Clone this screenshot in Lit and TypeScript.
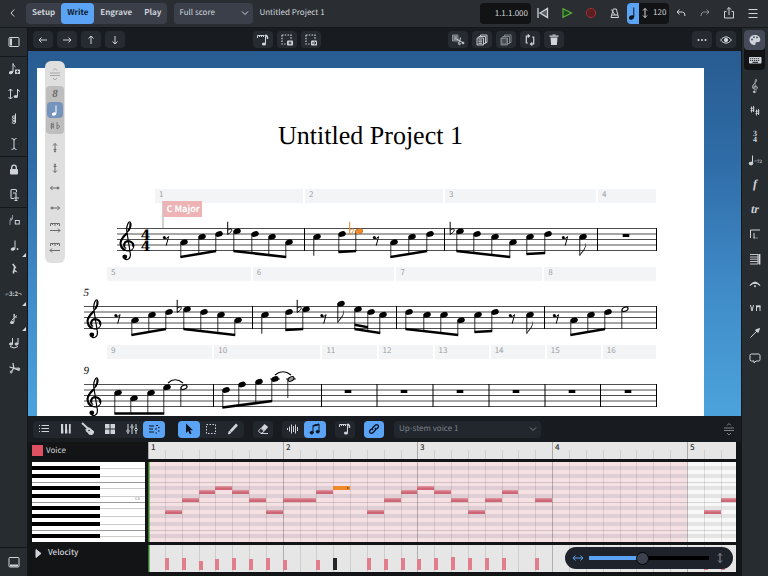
import { LitElement, html, svg, css, TemplateResult, SVGTemplateResult } from "lit";
import { customElement, state } from "lit/decorators.js";
import { classMap } from "lit/directives/class-map.js";

type Shape = SVGTemplateResult;

const clef: Shape = svg`
  <g fill="none" stroke="currentColor" stroke-linecap="round">
    <path stroke-width="1.2" d="M-1.2 3.2C-4.5 1.5-3.5-4.2 1-4.2C5-4.2 6.9-1.5 6.8 1C6.6 4.2 3.8 6 .8 5.9C-3.4 5.8-7-1-6.6-2.4C-6.4-7.5-1-11 1.8-14.5C4-17.5 4-20.5 3.4-22.5C2.8-24.5.8-22 0-18.5C-.7-15.5-.2-13 .3-10.5L3.4 9C4 14-.5 15.8-2.4 13.6"/>
    <path stroke-width="2" d="M-2.6 1C-3.2-2-1.5-3.6 1-3.7C4.4-3.7 6.2-1.5 6.2 1"/>
    <path stroke-width="2" d="M-2.4 5C-5 3.6-6.6 1.4-6.4-2C-6.2-6-3-8.8-.4-11.4"/>
    <path stroke-width="2" d="M1.6-14.8C3.4-17 3.8-19 3.4-21.2"/>
  </g>
  <circle cx="-2.2" cy="11.8" r="2.4" fill="currentColor"/>`;

const quarter: Shape = svg`<ellipse cx="7" cy="12" rx="2.3" ry="1.7" transform="rotate(-20 7 12)" fill="currentColor" stroke="none"/><path d="M9 11.5V3.5"/>`;

const icons: Record<string, Shape> = {
  back: svg`<path d="M9.2 4.5L6 8l3.2 3.5"/>`,
  down: svg`<path d="M5 6.5L8 9.5l3-3"/>`,
  left: svg`<path d="M12 8H4M6.5 5.5L4 8l2.5 2.5"/>`,
  right: svg`<path d="M4 8h8M9.5 5.5L12 8l-2.5 2.5"/>`,
  up: svg`<path d="M8 12V4M5.500 6.500L8 4l2.500 2.500"/>`,
  downArrow: svg`<path d="M8 4v8M5.500 9.500L8 12l2.500-2.500"/>`,
  prev: svg`<path d="M3 3v10M5 8l7.500-4.500v9z" stroke-width="1.300" fill="#5a5f66"/>`,
  play: svg`<path d="M4 3.800L12.500 8L4 12.200z" fill="#1d4a1c" stroke="#5fb23f" stroke-width="1.200"/>`,
  record: svg`<circle cx="8" cy="8" r="4.600" fill="#5b1f22" stroke="#a33231"/>`,
  metronome: svg`<path d="M6.300 4h3l2.200 8.500h-7.500zM5 10h6M8 10L4.500 4.500"/>`,
  tempoNote: svg`<ellipse cx="6.500" cy="12.500" rx="2.700" ry="2" transform="rotate(-20 6.500 12.500)" fill="#10151c" stroke="none"/><path d="M8.800 12V2.500" stroke="#10151c"/>`,
  vertical: svg`<path d="M8 3.500v9M6 5.500l2-2 2 2M6 10.500l2 2 2-2"/>`,
  horizontal: svg`<path d="M3 8h10M5.500 5.500L3 8l2.500 2.500M10.500 5.500L13 8l-2.500 2.500"/>`,
  undo: svg`<path d="M6.500 4.500L4 7l2.500 2.500M4 7h5.500q2.500 0 2.500 4"/>`,
  redo: svg`<path d="M9.500 4.500L12 7l-2.500 2.500M12 7H6.500Q4 7 4 11" opacity=".55"/>`,
  share: svg`<path d="M5.500 6.500h-2v6.500h9V6.500h-2M8 10V2.500M5.800 4.700L8 2.500l2.200 2.200"/>`,
  menu: svg`<path d="M3.500 4.500h9M3.500 8.500h9M3.500 12.500h9"/>`,
  ruleNote: svg`<path d="M2.500 6V3.500h7M4.500 3.500V5M6.500 3.500V5M8.500 3.500V5M10.500 3v8.500"/><path d="M10.500 3q2.500 1 2 4" stroke-width="1.400"/><ellipse cx="9" cy="12" rx="2.100" ry="1.600" fill="currentColor" stroke="none"/>`,
  boxPlus: svg`<path d="M3 3h9v5M3 3v9h4" stroke-dasharray="1.500 1.300" stroke-width="1.200"/><rect x="8" y="8.500" width="6" height="5" rx="1" fill="currentColor" stroke="none"/><path d="M11 9.500v3M9.500 11h3" stroke="#22272e" stroke-width=".9"/>`,
  boxArrow: svg`<path d="M3 3h9v5M3 3v9h4" stroke-dasharray="1.500 1.300" stroke-width="1.200"/><rect x="8" y="8.500" width="6" height="5" rx="1" fill="currentColor" stroke="none"/><path d="M9 11h4M11.500 9.500L13 11l-1.500 1.500" stroke="#22272e" stroke-width=".9"/>`,
  cutBox: svg`<path d="M2.500 3h5.500v6h-5.500z" fill="#5b616a" stroke="#9aa0a8" stroke-width=".8"/><path d="M3.800 5h3M3.800 7h2" stroke-width=".8"/><path d="M5.500 6.500l8 4.500M10.500 5.500L9.800 9l-2 2"/><circle cx="13" cy="11" r=".9"/><circle cx="9.500" cy="11.800" r=".9"/>`,
  copy: svg`<g stroke-width=".9"><path d="M6.500 4V3h6.500v7.500h-1.500M4.800 6V4.500h6.700V11.500H10"/><path d="M3 6h6.500v7H3z" fill="#3a4048"/><path d="M4.500 8h3.500M4.500 9.700h3.500M4.500 11.400h3.500"/></g>`,
  copyDim: svg`<g opacity=".6" stroke-width=".9"><path d="M6.500 4V3h6.500v7.500h-1.500M4.800 6V4.500h6.700V11.500H10"/><path d="M3 6h6.500v7H3z" fill="#8a9098"/><path d="M4.500 8h3.500M4.500 10h3.500" stroke="#22272e"/></g>`,
  loop: svg`<path d="M7.500 4H4.300v7h1.500M8.500 12h3.200V5h-1.500M5.700 2.500L7.500 4 5.700 5.500M10.300 10.500L8.500 12l1.800 1.500" stroke-width="1.200"/>`,
  trash: svg`<path d="M4.500 5.500h7l-.6 7.500h-5.800zM3.500 3.500h9v1.200h-9z" fill="currentColor" stroke="none"/><path d="M6.500 3h3"/>`,
  more: svg`<g fill="currentColor" stroke="none"><circle cx="4.500" cy="8" r="1"/><circle cx="8" cy="8" r="1"/><circle cx="11.500" cy="8" r="1"/></g>`,
  eye: svg`<path d="M2.500 8Q8 1.500 13.500 8Q8 14.500 2.500 8z"/><circle cx="8" cy="8" r="1.700" fill="currentColor"/>`,
  panelLeft: svg`<rect x="3" y="3.500" width="10" height="9" rx="1"/><path d="M5 4.500v7" stroke-width="2"/>`,
  panelBottom: svg`<rect x="3" y="3.500" width="10" height="9.500" rx="1"/><path d="M4 11.500h8" stroke-width="2"/>`,
  notePlus: svg`<ellipse cx="5" cy="11.500" rx="2.200" ry="1.600" transform="rotate(-20 5 11.500)" fill="currentColor" stroke="none"/><path d="M7 11V2.500q.2 2 2.500 3.500"/><rect x="9" y="8.500" width="5" height="4.500" fill="currentColor" stroke="none"/><path d="M11.500 9.300v3M10 10.700h3" stroke="#272c31" stroke-width=".9"/>`,
  moveNote: svg`<path d="M4.500 3v10M2.500 5l2-2 2 2M2.500 11l2 2 2-2M11.500 10V3q.2 1.500 2.500 2.500"/><ellipse cx="9.800" cy="10.500" rx="2.100" ry="1.600" fill="currentColor" stroke="none"/>`,
  chord: svg`<path d="M9.500 2.500V12"/><ellipse cx="7.800" cy="6" rx="1.500" ry="1.100"/><ellipse cx="7.800" cy="8.700" rx="1.500" ry="1.100"/><ellipse cx="7.800" cy="11.500" rx="1.500" ry="1.100"/>`,
  ibeam: svg`<path d="M5.500 2.500Q8 2.500 8 4.500Q8 2.500 10.500 2.500M8 4.500v7M5.500 13.500Q8 13.500 8 11.500Q8 13.500 10.500 13.500"/>`,
  lock: svg`<rect x="4" y="7" width="8" height="5.500" rx="1" fill="currentColor" stroke="none"/><path d="M5.700 7V5.500a2.300 2.300 0 014.600 0V7" stroke-width="1.300"/>`,
  caretG: svg`<path d="M10.500 5V3.500q0-1-1-1H6q-1 0-1 1v7q0 1 1 1h2M7 6h3v7.500M8.500 13.500h3M8 11h5" stroke-width="1.100"/>`,
  noteInput: svg`<path d="M6.500 3v4M4 8v5M4 8h2" opacity=".6"/><ellipse cx="5.300" cy="7" rx="1" ry=".8" opacity=".6"/><rect x="9.300" y="8.500" width="4" height="3.500"/>`,
  dotted: svg`${quarter}<circle cx="11.500" cy="12" r=".9" fill="currentColor" stroke="none"/>`,
  note: quarter,
  restQ: svg`<path d="M6.800 3l2.500 3.500q-2.500 1 0 3.500q-3-.8-1.500 2.500" stroke-width="1.500"/>`,
  grace: svg`<ellipse cx="6" cy="11.500" rx="2" ry="1.500" fill="currentColor" stroke="none"/><path d="M8 11V3q.2 2 2.500 4M5.500 9.500l5.500-5"/>`,
  tie: svg`<ellipse cx="5" cy="9" rx="1.500" ry="1.100" fill="currentColor"/><ellipse cx="10.500" cy="9" rx="1.500" ry="1.100" fill="currentColor"/><path d="M6.500 9V3M12 9V3M4 11.500q4 3 8 0"/>`,
  scissors: svg`<path d="M7 3l.8 5.200 5.700 2.300M3.500 7l4.300 1.200L5.500 11.500" stroke-width="1.200"/><path d="M7.800 8.200h5"/><circle cx="5.200" cy="12" r="1"/><circle cx="12.800" cy="9" r="1"/>`,
  palette: svg`<path d="M8 3c-3.500 0-5.500 2.200-5.500 5s2.300 5 5 5c1.500 0 .8-1.500 1-2.300.3-1 4.800.5 4.800-2.900C13.300 5 11 3 8 3z" fill="currentColor" stroke="none"/><g fill="#454b58" stroke="none"><circle cx="5" cy="7.500" r=".9"/><circle cx="7" cy="5.200" r=".9"/><circle cx="10" cy="5.400" r=".9"/></g>`,
  keyboard: svg`<rect x="2" y="5" width="12.500" height="6.500" rx=".8" fill="currentColor" stroke="none"/><path d="M3.200 6.700h10M3.200 8.500h10" stroke="#121314" stroke-dasharray="1 1"/><path d="M5.500 10.300h5.500" stroke="#121314"/>`,
  clefIcon: svg`<g transform="translate(8 9.500) scale(.36)" stroke="currentColor" stroke-width="2">${clef}</g>`,
  sharps: svg`<g stroke-width=".9"><path d="M4.500 3.500v6M6.500 3v6M3.500 5.500l4-.6M3.500 7.700l4-.6M9.500 6.500v6M11.500 6v6M8.500 8.500l4-.6M8.500 10.700l4-.6"/></g>`,
  mark: svg`<path d="M3.500 4v8M3.500 4h9.500M7 7v5M9.500 12h1M6.500 12h2"/>`,
  barlines: svg`<path d="M3 3.500h8M3 6h8M3 8.200h8M3 10.500h8M3 13h8M11 3v10" stroke-width=".9"/><path d="M12.500 3v10.500" stroke-width="1.800"/>`,
  fermata: svg`<path d="M3 9.500Q8 2.500 13 9.500Q8 5 3 9.500z" fill="currentColor"/><circle cx="8" cy="10.300" r="1" fill="currentColor" stroke="none"/>`,
  bows: svg`<path d="M3.500 5L5 11l1.500-6M9.500 11V6.500M13 11V6.500"/><path d="M9 6.300h4.500" stroke-width="2"/>`,
  line: svg`<path d="M3.500 12.500L10 6"/><path d="M12.500 3.500L8.500 5l2.500 2.500z" fill="currentColor"/>`,
  comment: svg`<path d="M4.500 4h7q1.500 0 1.500 1.500v4q0 1.500-1.500 1.500H9l-2 2v-2H4.500Q3 11 3 9.500v-4Q3 4 4.500 4z"/>`,
  grip: svg`<path d="M3 7h10M3 9.500h10M6 4.500l2-2 2 2M6 12l2 2 2-2" stroke-width=".9"/>`,
  accidentals: svg`<path d="M4.500 5v6M6.200 4.500v6M3.500 7l3.500-.5M3.500 9.200l3.500-.5M10 4v7q3-1.500 2.500-3t-2.500 0" stroke-width=".8"/>`,
  stretchUp: svg`<path d="M8 3.500V12M6 5.500l2-2 2 2M6.500 9.500h3"/><circle cx="8" cy="11.500" r=".6"/>`,
  stretchDown: svg`<path d="M8 4v8.500M6 10.500l2 2 2-2M6.500 6.500h3"/><circle cx="8" cy="4.500" r=".6"/>`,
  nudgeLeft: svg`<path d="M3.500 8H12M5.500 6l-2 2 2 2"/><circle cx="11" cy="8" r="1"/>`,
  nudgeRight: svg`<path d="M4 8h8.500M10.500 6l2 2-2 2"/><circle cx="5" cy="8" r="1"/>`,
  spaceRight: svg`<path d="M3.500 6V3.500h9V6M5.500 3.500V5M8 3.500V6M10.500 3.500V5M3 10.500h10M11 8.500l2 2-2 2"/>`,
  spaceLeft: svg`<path d="M3.500 6V3.500h9V6M5.500 3.500V5M8 3.500V6M10.500 3.500V5M13 10.500H3M5 8.500l-2 2 2 2"/>`,
  list: svg`<path d="M5.500 4.500h7.500M5.500 7.500h7.500M5.500 10.500h7.500M3 4.500h1M3 7.500h1M3 10.500h1"/>`,
  piano: svg`<path d="M3 3v9.500h2.500V3zM7 3v9.500h2.500V3zM10.700 3v9.500h2V3z" fill="currentColor" stroke="none"/><path d="M6.200 2.500v6M10 2.500v6" stroke="#22272e" stroke-width="1.800"/><path d="M6.200 8v5M10 8v5" stroke="#22272e" stroke-width=".8"/>`,
  guitar: svg`<path d="M2 2l6 5.500" stroke-width="1.800"/><path d="M6 8.500q1-2 3-1.500 2 .5 2.500 2 2.500.5 2 2.800-.5 2.200-3 1.700-2 0-2.500-2.200Q6 11 6 8.500z" fill="currentColor"/><circle cx="9" cy="9.500" r=".8" fill="#22272e" stroke="none"/>`,
  tiles: svg`<g fill="currentColor" stroke="none"><rect x="3" y="3" width="4.500" height="4.500"/><rect x="8.500" y="3" width="4.500" height="4.500"/><rect x="3" y="8.500" width="4.500" height="4.500"/><rect x="8.500" y="8.500" width="4.500" height="4.500"/></g>`,
  mixer: svg`<path d="M4 3v10M8 3v10M12 3v10"/><g fill="#22272e"><circle cx="4" cy="10" r="1.200"/><circle cx="8" cy="6" r="1.200"/><circle cx="12" cy="8.500" r="1.200"/></g>`,
  pianoRoll: svg`<path d="M3 5h5M3 8h4M3 11h5M10 4.500h2M12 6.500h1.500M9 8h2M12 10h1.500M9.500 12h1.500" stroke-width="1.100"/>`,
  pointer: svg`<path d="M5 2.500v9.500l2.300-2 1.500 3.200 1.700-.8-1.500-3.100h3z" fill="currentColor" stroke="none"/>`,
  marquee: svg`<rect x="3.500" y="3.500" width="9" height="9" stroke-dasharray="1.500 1.500"/>`,
  pencil: svg`<path d="M3.500 13l.8-3 1.500 1.800z" fill="currentColor"/><path d="M5.500 10.500l6.500-7" stroke-width="2.600"/>`,
  eraser: svg`<path d="M6 7L9.500 3l3.700 3-3.500 4z" fill="currentColor" stroke="none"/><path d="M5.800 7.300L3.500 10q1 2 2.700 2.300l3-2zM6 12.500h7"/>`,
  wave: svg`<path d="M2.500 7v2M4.500 5.500v5M6.500 3.500v9M8.500 5v6M10.500 3.500v9M12.500 6v4"/>`,
  beamed: svg`<path d="M6 11.500V4.500l6-1.500v7.500"/><path d="M6 5l6-1.500" stroke-width="1.800"/><ellipse cx="4.700" cy="11.700" rx="1.600" ry="1.300" fill="currentColor"/><ellipse cx="10.700" cy="10.700" rx="1.600" ry="1.300" fill="currentColor"/>`,
  link: svg`<g stroke-width="1.400"><path d="M7 9q-1.300-1.300 0-2.600l2.400-2.300q1.400-1 2.600.1 1 1.200-.1 2.500L10.300 8.300"/><path d="M9 7q1.300 1.300 0 2.600l-2.400 2.300q-1.400 1-2.600-.1-1-1.200.1-2.500L5.700 7.700"/></g>`,
};

const icon = (name: string): TemplateResult => html`<svg class="icon" viewBox="0 0 16 16" aria-hidden="true">${icons[name]}</svg>`;

const glyphText = (text: string, size: number): TemplateResult =>
  html`<svg class="icon" viewBox="0 0 16 16" aria-hidden="true"><text class="glyph italic" x="8" y="11" font-size=${size}>${text}</text></svg>`;

/* Vertical position of each pitch on the staff. */
const Y: Record<string, number> = { A: 39.25, C: 33.75, D: 31, E: 28.25, F: 25.5, G: 22.75, H: 20 };

interface Group { notes: [number, string][]; from?: number; to?: number; }
interface System {
  number?: string; left: number; lead: number; cells: [string, number][]; bars: number[];
  rests: number[]; whole: number[]; groups: Group[]; extra: Shape;
}

const head = (x: number, p: string, fill = "#000") =>
  svg`<ellipse cx=${x} cy=${Y[p]} rx="3.900" ry="2.700" transform="rotate(-20 ${x} ${Y[p]})" fill=${fill}/>`;
const half = (x: number, p: string, end: number) => svg`
  <ellipse cx=${x} cy=${Y[p]} rx="3.200" ry="1.900" transform="rotate(-24 ${x} ${Y[p]})" fill="#fff" stroke="#000" stroke-width="1.200"/>
  <path d="M${x - 3.2} ${Y[p] + 1}V${end}" stroke="#000" stroke-width=".8"/>`;
const flat = (x: number, color = "#000") =>
  svg`<path transform="translate(${x} ${Y.E})" d="M-1.800-9.500V3.200C1 1.500 2.800-.5 2.200-1.800C1.400-3-.5-2-1.800-.8" fill="none" stroke=${color}/>`;
const single = (x: number, p: string, len: number) => svg`${head(x, p)}
  <path d="M${x - 3.2} ${Y[p] + 1}v${len}" stroke="#000" stroke-width=".9"/>`;
const flagged = (x: number, p: string) => svg`${single(x, p, 18)}
  <path d="M${x - 3.2} ${Y[p] + 19}c.4-4 6.200-6 5.600-13c2 5-2.600 9-5.600 13z"/>`;
const rest8 = (x: number) => svg`<g transform="translate(${x} 37)"><circle cx="-1.700" cy="-2.600" r="1.500"/>
  <path d="M-2-1.800Q.5-.6 2.600-3.400L.2 5.600" fill="none" stroke="#000"/></g>`;
const beamed = (g: Group) => {
  const from = g.from ?? 50, to = g.to ?? 50;
  const x0 = g.notes[0][0] - 3.2, x1 = g.notes[g.notes.length - 1][0] - 3.2;
  const at = (x: number) => from + ((to - from) * (x - x0)) / (x1 - x0);
  return svg`${g.notes.map(([x, p]) => svg`${head(x, p)}<path d="M${x - 3.2} ${Y[p] + 1}V${at(x - 3.2)}" stroke="#000" stroke-width=".8"/>`)}
    <path d="M${x0 - .4} ${from - 1.3}L${x1 + .4} ${to - 1.3}v2.600L${x0 - .4} ${from + 1.3}z"/>`;
};

const systems: System[] = [
  {
    left: 117, lead: 116, cells: [["1", 148], ["2", 138], ["3", 151], ["4", 58]],
    bars: [304.500, 444.500, 597.500, 656.500], rests: [166, 376, 565], whole: [626],
    groups: [
      { notes: [[184, "A"], [202, "C"], [219, "D"]], from: 54, to: 48 },
      { notes: [[237, "E"], [255, "D"], [272, "C"], [289, "A"]], from: 48, to: 54 },
      { notes: [[394, "A"], [412, "C"], [430, "D"]], from: 54, to: 48 },
      { notes: [[460, "E"], [477, "D"], [495, "C"], [513, "A"]], from: 48, to: 54 },
      { notes: [[530, "C"], [548, "D"]], from: 51, to: 50 },
      { notes: [[342, "D"], [359, "E"]], from: 49, to: 48 },
    ],
    extra: svg`${flat(229.5)}${flat(452)}${flat(351.5, "#f0872b")}${head(359, "E", "#f0872b")}
      ${single(317, "C", 18)}${flagged(583, "C")}
      <text class="time" x="145.500" y="36.500">4</text><text class="time" x="145.500" y="47.500">4</text>
      <path d="M163 -2V25" stroke="#b0b0b0" stroke-width="1.200"/>
      <rect x="163" y="-2" width="39" height="16" fill="#edb3b5"/>
      <text class="key" x="166.500" y="9">C Major</text>`,
  },
  {
    number: "5", left: 84, lead: 68, cells: [["5", 144], ["6", 142], ["7", 146], ["8", 112]],
    bars: [252.500, 396.500, 544.500, 656.500], rests: [117.500, 323.500, 512, 556], whole: [],
    groups: [
      { notes: [[135, "A"], [152, "C"], [169, "D"]], from: 54, to: 48 },
      { notes: [[187, "E"], [204, "D"], [221, "C"], [238, "A"]], from: 48, to: 54 },
      { notes: [[289, "D"], [306, "E"]], from: 49, to: 48 },
      { notes: [[358, "E"], [371, "D"], [383, "C"]], from: 48, to: 52 },
      { notes: [[409, "D"], [427, "C"], [444, "C"], [461, "A"]], from: 48, to: 54 },
      { notes: [[478, "C"], [495, "D"]], from: 51, to: 50 },
      { notes: [[574, "A"], [591, "C"], [608, "D"]], from: 54, to: 48 },
    ],
    extra: svg`${flat(179)}${flat(299)}${single(265, "C", 18)}${flagged(341, "G")}${flagged(530, "C")}
      <path d="M354.500 42.500L368 45v2.400L354.500 45z"/>${half(625, "E", 47.5)}`,
  },
  {
    number: "9", left: 84, lead: 68,
    cells: [["9", 105], ["10", 106], ["11", 54], ["12", 54], ["13", 54], ["14", 54], ["15", 54], ["16", 53]],
    bars: [213.500, 321.500, 377, 433, 489, 545, 600.500, 656.500], rests: [],
    whole: [348, 404, 460, 516, 572, 628],
    groups: [
      { notes: [[118, "C"], [134, "A"], [151, "C"], [167, "E"]], from: 54.5, to: 54.5 },
      { notes: [[226, "D"], [242, "F"], [259, "G"], [275, "H"]], from: 48.5, to: 42 },
    ],
    extra: svg`${half(184, "E", 47.5)}${half(291, "H", 39)}
      <path d="M270 20h10M286 20h10" stroke="#000" stroke-width=".8"/>
      <path d="M168 24Q175 17.500 183 24M275 16Q283 9.500 291 16" fill="none" stroke="#000" stroke-width="1.200"/>`,
  },
];

const STEP = 16.84;
const DARK_ROWS = [1, 3, 6, 8, 11, 13, 15, 18];
/* start (in eighths), row, length, velocity height */
const notes: [number, number, number, number][] = [
  [1, 12, 1, 12], [2, 9, 1, 12], [3, 7, 1, 9], [4, 6, 1, 11], [5, 7, 1, 12], [6, 9, 1, 11], [7, 12, 1, 12],
  [8, 9, 2, 10], [10, 7, 1, 10], [11, 6, 1, 12], [13, 12, 1, 12], [14, 9, 1, 11], [15, 7, 1, 12],
  [16, 6, 1, 11], [17, 7, 1, 12], [18, 9, 1, 13], [19, 12, 1, 12], [20, 9, 1, 12], [21, 7, 1, 12], [23, 9, 1, 12],
  [33, 12, 1, 11], [34, 9, 1, 11],
];
const SELECTED = 11;
const beats = Array.from({ length: 40 }, (_, i) => i);
const bx = (i: number) => Math.round(i * STEP);

@customElement("app-root")
export class AppRoot extends LitElement {
  @state() private mode = "Write";
  @state() private zoom = 44;

  static styles = css`
    :host { display: grid; grid-template-rows: 28px minmax(0, 1fr); height: 100vh; overflow: hidden; background: #15171a; color: #d0d4da;
      font: 8px/12px "Noto Sans CJK SC", "Noto Sans", sans-serif; text-rendering: geometricPrecision; }
    * { box-sizing: border-box; }
    button, select, input { font: inherit; color: inherit; margin: 0; padding: 0; border: 0; background: none; text-rendering: inherit; }
    button { display: flex; align-items: center; justify-content: center; }
    h1, p { margin: 0; }
    .icon { width: 16px; height: 16px; flex: none; display: block; fill: none; stroke: currentColor; stroke-width: 1; overflow: visible; }
    .glyph { font-family: "Liberation Serif", serif; font-weight: 700; text-anchor: middle; fill: currentColor; stroke: none; }
    .italic { font-style: italic; }
    header { display: flex; align-items: center; padding: 0 3px 1px 0; background: #2a2e33; border-bottom: 1px solid #15181b; }
    .back { width: 26px; height: 20px; }
    .modes { display: flex; background: #3a3f4a; border-radius: 4px; }
    .modes button { height: 21px; padding: 0 6px; border-radius: 4px; font-weight: 700; }
    .modes .on { background: #5ba4f5; color: #0c1a2c; }
    .pick { position: relative; display: flex; align-items: center; background: #3a3f4a; border-radius: 4px; }
    .pick select { appearance: none; width: 100%; height: 100%; padding: 0 18px 0 5px; outline: 0; }
    .pick .icon { position: absolute; right: 0; pointer-events: none; }
    .layout { width: 79px; height: 21px; margin: 0 6px 0 7px; }
    .transport { margin-left: auto; display: flex; align-items: center; }
    .transport button { width: 24px; height: 21px; }
    .position { width: 51px; height: 21px; padding-right: 3px; line-height: 21px; text-align: right; background: #121314; border-radius: 4px; }
    .tempo { display: flex; align-items: center; width: 42px; height: 21px; background: #121314; border-radius: 4px; overflow: hidden; }
    .tempo .beat { width: 13px; background: #5ba4f5; }
    .tempo .icon { margin: 0 -2px; }
    .tempo input { width: 18px; margin-left: 2px; outline: 0; }
    .body { display: grid; grid-template-columns: 28px minmax(0, 1fr) 27px; min-height: 0; }
    .rail { background: #272c31; display: flex; flex-direction: column; border-right: 1px solid #14171a; min-height: 0; }
    .rail.right { border-right: 0; border-left: 1px solid #14171a; }
    .set { display: grid; grid-auto-rows: 1fr; border-bottom: 1px solid #15181b; }
    .set button, .tools button { position: relative; width: 100%; }
    .h1 { height: 29px; }
    .h2 { height: 51px; }
    .h4 { height: 100px; }
    .h7 { height: 172px; border: 0; }
    .last { height: 29px; margin-top: auto; border-top: 1px solid #15181b; border-bottom: 0; }
    .more::after { content: ""; position: absolute; right: 1px; bottom: 0; border: 2px solid; border-color: transparent #d5d9df #d5d9df transparent; }
    .tiny { font-size: 6px; font-weight: 700; }
    .toggle { margin: 2px 3px 4px 2px; background: #121314; border-radius: 4px; }
    .toggle button { width: 100%; height: 20px; border-radius: 4px; }
    .toggle .on { background: #454b58; }
    .tools { display: grid; height: 296px; grid-auto-rows: 1fr; }
    main { display: grid; grid-template-rows: 23px minmax(0, 1fr) 160px; min-width: 0; min-height: 0; }
    .bar { display: flex; align-items: center; justify-content: space-between; padding: 0 5px; background: #181b20; }
    .bar div { display: flex; gap: 4px; }
    .bar button { width: 20px; height: 17px; border-radius: 4px; background: #262b31; }
    .canvas { position: relative; overflow: hidden; padding: 17px 37px 0 9px; background: linear-gradient(#285c91, #2f6ca7 30%, #3f8bc8 65%, #4ca3dc); }
    .page { background: #fff; color: #000; min-height: 100%; }
    .page h1 { height: 121px; padding-top: 54px; font: 26px/28px "Liberation Serif", serif; text-align: center; }
    .measures { display: grid; column-gap: 2px; height: 14px; }
    .measures span { padding-left: 4px; line-height: 12px; color: #9b9ea3; background: #f3f4f6; }
    .staff { display: block; width: 100%; overflow: visible; }
    .staff .time { font: 700 14px "DejaVu Serif", serif; text-anchor: middle; }
    .staff .num { font: italic 11px "Liberation Serif", serif; }
    .staff .key { font-size: 9px; font-weight: 700; fill: #fff; }
    .palette { position: absolute; left: 17px; top: 10px; width: 20px; height: 202px; padding: 4px 1px; background: #dfdfdf; border-radius: 6px; color: #6b6b6b; display: flex; flex-direction: column; }
    .palette button { width: 18px; height: 20px; }
    .palette .grip { color: #a0a0a0; height: 18px; }
    .palette .group { margin: 3px 0 4px; background: #bebebe; border-radius: 4px; }
    .palette .group button { height: 16px; }
    .palette .group .on { background: #7494bc; color: #fff; border-radius: 4px; width: 16px; margin: 0 1px; }
    .panel { position: relative; display: grid; grid-template-rows: 26px 17px 3px 80px 3px 27px; grid-template-columns: 120px minmax(0, 1fr) 5px; background: #131416; }
    .strip { grid-column: 1 / -1; display: flex; align-items: center; padding: 0 4px 0 5px; background: #181c21; }
    .cluster { display: flex; background: #22272e; border-radius: 4px; margin-right: 9px; }
    .wide { margin-right: 13px; }
    .strip button { width: 22px; height: 17px; border-radius: 4px; }
    .single button { width: 20px; }
    .strip .on { background: #5ba4f5; color: #0c1420; }
    .strip .voice { width: 147px; height: 17px; margin-left: 1px; background: #22272e; color: #7b818b; }
    .strip .resize { margin-left: auto; width: 16px; color: #8b8f96; }
    .track { display: flex; align-items: center; gap: 3px; padding-left: 4px; }
    .swatch { width: 11px; height: 11px; background: #df5063; }
    .ruler, .lane { width: 100%; height: 100%; display: block; grid-column: 2; }
    .ruler { background: #e6e6e6; }
    .ruler text { fill: #333; font-size: 8px; font-weight: 500; }
    .keys { grid-row: 4; width: 113px; height: 80px; margin-left: 4px; background: #fff; display: block; }
    .keys text { font-size: 4px; fill: #777; }
    .roll { grid-row: 4; background: #f8f8f8; }
    .velocity { grid-row: 6; display: flex; align-items: center; gap: 2px; padding: 0 0 11px 2px; font-weight: 500; }
    .velLane { grid-row: 6; background: #e6e6e6; }
    .zoom { position: absolute; right: 8px; bottom: 7px; width: 168px; height: 22px; padding: 0 5px; border-radius: 11px; background: #1e222a; display: flex; align-items: center; gap: 3px; color: #5ba4f5; }
    .zoom .icon:last-child { color: #8e939b; }
    .zoom input { appearance: none; flex: 1; min-width: 0; height: 12px; background: linear-gradient(#5ba4f5, #5ba4f5) left / 45% 4px no-repeat, linear-gradient(#000, #000) center / 100% 4px no-repeat; }
    .zoom input::-webkit-slider-thumb { appearance: none; width: 13px; height: 13px; border-radius: 50%; background: #3c434e; border: 1px solid #050607; }
  `;

  private buttons(names: string[]) {
    return names.map((n) => html`<button aria-label=${n}>${icon(n)}</button>`);
  }

  private system(s: System) {
    const cols = [s.lead, ...s.cells.map((c) => c[1]), 46].map((n) => `minmax(0, ${n}fr)`).join(" ");
    return html`
      <div class="measures" style="grid-template-columns: ${cols}"><i></i>${s.cells.map(([n]) => html`<span>${n}</span>`)}</div>
      <svg class="staff" viewBox="37 0 667 64" role="img" aria-label="Staff">
        ${[25.5, 31, 36.5, 42, 47.5].map((y) => svg`<path d="M${s.left} ${y}H657" stroke="#222" stroke-width=".8"/>`)}
        ${s.bars.map((x) => svg`<path d="M${x} 25V48" stroke="#000"/>`)}
        <g transform="translate(${s.left + 10} 42)">${clef}</g>
        ${s.number ? svg`<text class="num" x="83.500" y="14.500">${s.number}</text>` : ""}
        ${s.rests.map(rest8)}
        ${s.whole.map((x) => svg`<rect x=${x - 3.3} y="31" width="6.600" height="3"/>`)}
        ${s.groups.map(beamed)}${s.extra}
      </svg>`;
  }

  private gridLines(height: number) {
    return beats.map((i) => svg`<path d="M${bx(i) + .5} 0V${height}" stroke="#000" stroke-opacity=${i % 8 ? .1 : .24}/>`);
  }

  render() {
    return html`
      <header>
        <button class="back" aria-label="Back">${icon("back")}</button>
        <nav class="modes">${["Setup", "Write", "Engrave", "Play"].map((m) => html`
          <button class=${classMap({ on: m === this.mode })} @click=${() => (this.mode = m)}>${m}</button>`)}</nav>
        <label class="pick layout"><select aria-label="Layout"><option>Full score</option></select>${icon("down")}</label>
        <span>Untitled Project 1</span>
        <div class="transport">
          <output class="position">1.1.1.000</output>
          ${this.buttons(["prev", "play", "record", "metronome"])}
          <div class="tempo"><button class="beat" aria-label="Beat unit">${icon("tempoNote")}</button>${icon("vertical")}
            <input aria-label="Tempo" value="120"></div>
          ${this.buttons(["undo", "redo", "share", "menu"])}
        </div>
      </header>
      <div class="body">
        <aside class="rail">
          <div class="set h1">${this.buttons(["panelLeft"])}</div>
          <div class="set h4">${this.buttons(["notePlus", "moveNote", "chord", "ibeam"])}</div>
          <div class="set h2">${this.buttons(["lock", "caretG"])}</div>
          <div class="set h7">
            ${this.buttons(["noteInput"])}
            <button class="more" aria-label="Dotted notes">${icon("dotted")}</button>
            ${this.buttons(["restQ"])}
            <button class="more tiny" aria-label="Tuplets">⌐3:2¬</button>
            <button class="more" aria-label="Grace notes">${icon("grace")}</button>
            ${this.buttons(["tie", "scissors"])}
          </div>
          <div class="set last">${this.buttons(["panelBottom"])}</div>
        </aside>
        <main>
          <div class="bar">
            <div>${this.buttons(["left", "right", "up", "downArrow"])}</div>
            <div>${this.buttons(["ruleNote", "boxPlus", "boxArrow"])}</div>
            <div>${this.buttons(["cutBox", "copy", "copyDim", "loop", "trash"])}</div>
            <div>${this.buttons(["more", "eye"])}</div>
          </div>
          <section class="canvas">
            <article class="page"><h1>Untitled Project 1</h1>${systems.map((s) => this.system(s))}</article>
            <div class="palette">
              <button class="grip" aria-label="Move">${icon("grip")}</button>
              <div class="group">
                <button aria-label="Octave">${glyphText("8", 11)}</button>
                <button class="on" aria-label="Note">${icon("note")}</button>
                <button aria-label="Accidentals">${icon("accidentals")}</button>
              </div>
              ${this.buttons(["stretchUp", "stretchDown", "nudgeLeft", "nudgeRight", "spaceRight", "spaceLeft"])}
            </div>
          </section>
          <section class="panel">
            <div class="strip">
              <div class="cluster wide">${this.buttons(["list", "piano", "guitar", "tiles", "mixer"])}<button class="on" aria-label="Key editor">${icon("pianoRoll")}</button></div>
              <div class="cluster"><button class="on" aria-label="Select">${icon("pointer")}</button>${this.buttons(["marquee", "pencil"])}</div>
              <div class="cluster single">${this.buttons(["eraser"])}</div>
              <div class="cluster">${this.buttons(["wave"])}<button class="on" aria-label="Notated">${icon("beamed")}</button></div>
              <div class="cluster single">${this.buttons(["ruleNote"])}</div>
              <div class="cluster single"><button class="on" aria-label="Link">${icon("link")}</button></div>
              <label class="pick voice"><select aria-label="Voice"><option>Up-stem voice 1</option></select>${icon("down")}</label>
              <button class="resize" aria-label="Resize">${icon("grip")}</button>
            </div>
            <div class="track"><i class="swatch"></i><span>Voice</span></div>
            <svg class="ruler">
              ${beats.map((i) => svg`<path d="M${bx(i) + .5} ${i % 8 ? 8 : 0}V17" stroke=${i % 8 ? "#cfcfcf" : "#aaa"}/>`)}
              ${[1, 2, 3, 4, 5].map((n, i) => svg`<text x=${bx(i * 8) + 3} y="8">${n}</text>`)}
            </svg>
            <svg class="keys" aria-label="Keyboard">
              ${DARK_ROWS.map((r) => svg`<rect y=${r * 4} width="68" height="4" fill="#000"/><path d="M68 ${r * 4 + 2.500}H113" stroke="#ccc"/>`)}
              ${[20, 40, 68].map((y) => svg`<path d="M0 ${y + .5}H113" stroke="#999"/>`)}
              <text x="103" y="38">C4</text>
            </svg>
            <svg class="lane roll" aria-label="Notes">
              <defs><linearGradient id="n" x2="0" y2="1"><stop offset="0" stop-color="#e09aa4"/><stop offset=".6" stop-color="#cf6676"/></linearGradient></defs>
              ${DARK_ROWS.map((r) => svg`<rect y=${r * 4} width="100%" height="4" fill="#e4e4e4"/>`)}
              <rect width=${bx(32)} height="80" fill="#f5e1e4"/>
              ${DARK_ROWS.map((r) => svg`<rect y=${r * 4} width=${bx(32)} height="4" fill="#dfcfd4"/>`)}
              ${[20, 40, 68].map((y) => svg`<path d="M0 ${y + .5}H9999" stroke="#000" stroke-opacity=".14"/>`)}
              ${this.gridLines(80)}
              ${notes.map(([s, r, l]) => svg`<rect x=${bx(s)} y=${r * 4} width=${bx(s + l) - bx(s)} height="4" fill=${s === SELECTED ? "#ef8a2a" : "url(#n)"}/>`)}
              <path d="M${bx(12) - 3} 25l2 1-2 1z" fill="#7a3d08"/>
              <path d="M.5 0V80" stroke="#2f7d22" stroke-width="2"/>
            </svg>
            <div class="velocity"><svg class="icon" viewBox="0 0 16 16"><path d="M6 4.500l5 4-5 4z" fill="currentColor"/></svg><span>Velocity</span></div>
            <svg class="lane velLane" aria-label="Velocities">
              ${this.gridLines(27)}
              ${notes.map(([s, , , h]) => svg`<rect x=${bx(s)} y=${25 - h} width="4" height=${h} fill=${s === SELECTED ? "#24272a" : "#e27d8b"}/>`)}
              <path d="M.5 0V27" stroke="#2f7d22" stroke-width="2"/>
            </svg>
            <div class="zoom">${icon("horizontal")}
              <input type="range" aria-label="Zoom" .value=${String(this.zoom)} @input=${(e: Event) => (this.zoom = +(e.target as HTMLInputElement).value)}>
              ${icon("vertical")}</div>
          </section>
        </main>
        <aside class="rail right">
          <div class="toggle"><button class="on" aria-label="Palettes">${icon("palette")}</button>${this.buttons(["keyboard"])}</div>
          <div class="tools">
            ${this.buttons(["clefIcon", "sharps"])}
            <button aria-label="Time signatures"><svg class="icon" viewBox="0 0 16 16"><text class="glyph" x="8" y="7.500" font-size="8">3</text><text class="glyph" x="8" y="13.500" font-size="8">4</text></svg></button>
            <button aria-label="Tempo marks"><svg class="icon" viewBox="0 0 16 16"><ellipse cx="4" cy="11.500" rx="1.800" ry="1.400" fill="currentColor"/><path d="M5.500 11V3.500"/><text class="glyph" x="11" y="10.500" font-size="5">=72</text></svg></button>
            <button aria-label="Dynamics">${glyphText("f", 12)}</button>
            <button aria-label="Ornaments">${glyphText("tr", 12)}</button>
            ${this.buttons(["mark", "barlines", "fermata", "bows", "line", "comment"])}
          </div>
        </aside>
      </div>`;
  }
}
